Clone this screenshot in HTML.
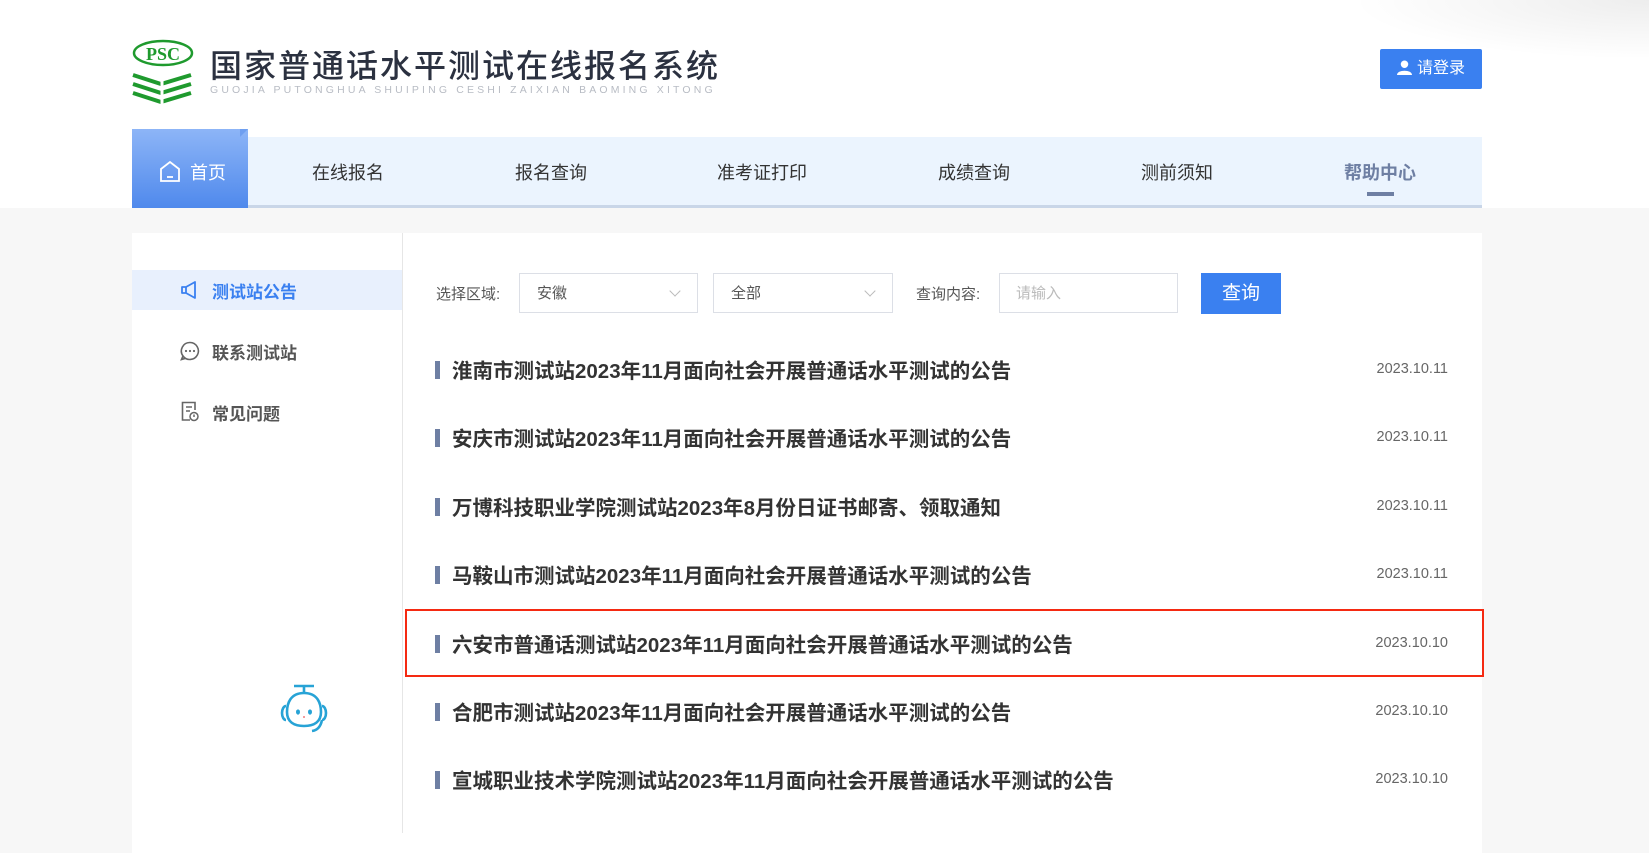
<!DOCTYPE html>
<html><head><meta charset="utf-8"><style>
*{margin:0;padding:0;box-sizing:border-box}
body{width:1649px;height:828px;overflow:hidden;background:#f7f7f7;font-family:"Liberation Sans","Noto Sans CJK SC",sans-serif;position:relative}
.top{position:absolute;left:0;top:0;width:1649px;height:208px;background:#fff}
.shade{position:absolute;right:0;top:0;width:300px;height:60px;background:radial-gradient(ellipse at 100% 0%,rgba(0,0,0,0.07),rgba(0,0,0,0) 70%)}
.abs{position:absolute}
.title{left:210px;top:44px;font-size:32px;letter-spacing:2.0px;color:#2b3140;font-family:"Noto Sans CJK SC",sans-serif;font-weight:500;white-space:nowrap;line-height:40px}
.sub{left:210px;top:84px;font-size:10.5px;letter-spacing:3.15px;color:#b8bcc4;white-space:nowrap}
.login{left:1380px;top:49px;width:102px;height:40px;background:#3a80f0;border-radius:2px;color:#fff;font-size:16px;line-height:40px;text-align:center}
.nav{left:132px;top:137px;width:1350px;height:71px;background:#ebf4fe;border-bottom:3px solid #c9d6e8}
.home{left:132px;top:129px;width:116px;height:79px;background:linear-gradient(#8db5f7,#4f89ec);color:#fff;font-size:18px}
.fold{left:240px;top:129px;width:0;height:0;border-left:8px solid #6f9ff0;border-bottom:8px solid transparent}
.ni{top:159px;font-size:18px;color:#333;transform:translateX(-50%);white-space:nowrap}
.card{left:132px;top:233px;width:1350px;height:620px;background:#fff}
.side{left:132px;top:233px;width:271px;height:600px;border-right:1px solid #e6e6e6}
.sact{left:132px;top:270px;width:270px;height:40px;background:#e8f0fd}
.si{font-size:17px;font-weight:bold;color:#555;left:212px}
.lbl{font-size:15px;color:#555;top:283px}
.sel{top:273px;height:40px;border:1px solid #dcdfe6;background:#fff;font-size:15px;color:#555;line-height:40px;padding-left:17px}
.sel.c:after{content:"";position:absolute;right:18px;top:13px;width:7px;height:7px;border-right:1px solid #bbb;border-bottom:1px solid #bbb;transform:rotate(45deg)}
.btn{left:1201px;top:273px;width:80px;height:41px;background:#3a80f0;color:#fff;font-size:19px;line-height:41px;text-align:center}
.it{left:435px;width:1013px;height:24px}
.it b{position:absolute;left:0;top:3px;width:5px;height:18px;background:#6e7fa3}
.it span{position:absolute;left:17px;top:-4px;font-size:20.5px;font-weight:bold;color:#333;white-space:nowrap}
.it i{position:absolute;right:0;top:3px;font-style:normal;font-size:14.5px;color:#666}
.red{left:405px;top:609px;width:1079px;height:68px;border:2.5px solid #f52a12}
</style></head><body>
<div class="top"></div><div class="shade"></div>
<svg class="abs" style="left:130px;top:39px" width="66" height="66" viewBox="0 0 66 66">
<ellipse cx="33" cy="14" rx="29" ry="12" fill="none" stroke="#1f9a2e" stroke-width="2.5"/>
<text x="33" y="21" text-anchor="middle" font-family="Liberation Serif,serif" font-weight="bold" font-size="18" fill="#1f9a2e">PSC</text>
<g fill="none" stroke="#1f9a2e" stroke-width="4">
<path d="M3 36 L31 45 L61 36"/><path d="M3 45 L31 54 L61 45"/><path d="M3 54 L31 63 L61 54"/></g>
<path d="M32 40 V66" stroke="#fff" stroke-width="3"/>
</svg>
<div class="abs title">国家普通话水平测试在线报名系统</div>
<div class="abs sub">GUOJIA PUTONGHUA SHUIPING CESHI ZAIXIAN BAOMING XITONG</div>
<div class="abs login"><svg width="15" height="15" viewBox="0 0 16 16" style="vertical-align:-2px;margin-right:5px"><circle cx="8" cy="4.5" r="4" fill="#fff"/><path d="M0 16 C0 10 16 10 16 16Z" fill="#fff"/></svg>请登录</div>
<div class="abs nav"></div>
<div class="abs home"><svg class="abs" style="left:28px;top:32px" width="20" height="21" viewBox="0 0 20 21"><path d="M1 8 L10 1 L19 8 V20 H1Z" fill="none" stroke="#fff" stroke-width="1.8"/><path d="M7 16 H13" stroke="#fff" stroke-width="1.8"/></svg><span class="abs" style="left:58px;top:30px">首页</span></div>
<div class="abs fold"></div>
<div class="abs ni" style="left:348px">在线报名</div>
<div class="abs ni" style="left:551px">报名查询</div>
<div class="abs ni" style="left:762px">准考证打印</div>
<div class="abs ni" style="left:974px">成绩查询</div>
<div class="abs ni" style="left:1177px">测前须知</div>
<div class="abs ni" style="left:1380px;color:#6e7fa3;font-weight:bold">帮助中心</div>
<div class="abs" style="left:1367px;top:192px;width:27px;height:4px;background:#6e7fa3"></div>
<div class="abs card"></div>
<div class="abs side"></div>
<div class="abs sact"></div>
<svg class="abs" style="left:180px;top:281px" width="20" height="18" viewBox="0 0 20 18"><path d="M2 6 H6 L15 1 V17 L6 12 H2Z M6 6 V12" fill="none" stroke="#3a80f0" stroke-width="1.8" stroke-linejoin="round"/></svg>
<div class="abs si" style="top:278px;color:#3a80f0">测试站公告</div>
<svg class="abs" style="left:180px;top:341px" width="20" height="20" viewBox="0 0 20 20"><path d="M10 1.5 A8.5 8.5 0 1 1 3 15 L1.5 18.5 L5.5 17.3 M10 1.5 A8.5 8.5 0 0 0 3 15" fill="none" stroke="#666" stroke-width="1.6"/><circle cx="6" cy="10" r="1.1" fill="#666"/><circle cx="10" cy="10" r="1.1" fill="#666"/><circle cx="14" cy="10" r="1.1" fill="#666"/></svg>
<div class="abs si" style="top:339px">联系测试站</div>
<svg class="abs" style="left:181px;top:401px" width="18" height="21" viewBox="0 0 18 21"><path d="M9 19 H1.5 V1.5 H14 V9" fill="none" stroke="#666" stroke-width="1.6"/><path d="M5 6 H11 M5 10 H9" stroke="#666" stroke-width="1.6"/><circle cx="13" cy="15.5" r="4" fill="none" stroke="#666" stroke-width="1.5"/><path d="M13 13.5 V16" stroke="#666" stroke-width="1.5"/></svg>
<div class="abs si" style="top:400px">常见问题</div>
<svg class="abs" style="left:274px;top:682px" width="60" height="54" viewBox="0 0 60 54"><g fill="none" stroke="#27a3d6" stroke-width="2.6"><path d="M20 4 H40 M30 4 V10"/><path d="M30 11 C44 11 47 22 47 30 C47 40 40 44 30 44 C20 44 13 40 13 30 C13 22 16 11 30 11Z"/><path d="M12 24 A4 7 0 0 0 12 38 M48 24 A4 7 0 0 1 48 38 M48 38 Q46 48 38 49"/></g><ellipse cx="24" cy="30" rx="2" ry="2.6" fill="#27a3d6"/><ellipse cx="36" cy="30" rx="2" ry="2.6" fill="#27a3d6"/><circle cx="30" cy="35" r="0.9" fill="#e55"/></svg>
<div class="abs lbl" style="left:436px">选择区域:</div>
<div class="abs sel c" style="left:519px;width:179px">安徽</div>
<div class="abs sel c" style="left:713px;width:180px">全部</div>
<div class="abs lbl" style="left:916px">查询内容:</div>
<div class="abs sel" style="left:999px;width:179px;color:#bbb;padding-left:16px;">请输入</div>
<div class="abs btn">查询</div>
<div class="abs it" style="top:358px"><b></b><span>淮南市测试站2023年11月面向社会开展普通话水平测试的公告</span><i>2023.10.11</i></div>
<div class="abs it" style="top:426px"><b></b><span>安庆市测试站2023年11月面向社会开展普通话水平测试的公告</span><i>2023.10.11</i></div>
<div class="abs it" style="top:495px"><b></b><span>万博科技职业学院测试站2023年8月份日证书邮寄、领取通知</span><i>2023.10.11</i></div>
<div class="abs it" style="top:563px"><b></b><span>马鞍山市测试站2023年11月面向社会开展普通话水平测试的公告</span><i>2023.10.11</i></div>
<div class="abs it" style="top:632px"><b></b><span>六安市普通话测试站2023年11月面向社会开展普通话水平测试的公告</span><i>2023.10.10</i></div>
<div class="abs it" style="top:700px"><b></b><span>合肥市测试站2023年11月面向社会开展普通话水平测试的公告</span><i>2023.10.10</i></div>
<div class="abs it" style="top:768px"><b></b><span>宣城职业技术学院测试站2023年11月面向社会开展普通话水平测试的公告</span><i>2023.10.10</i></div>
<div class="abs red"></div>
</body></html>
